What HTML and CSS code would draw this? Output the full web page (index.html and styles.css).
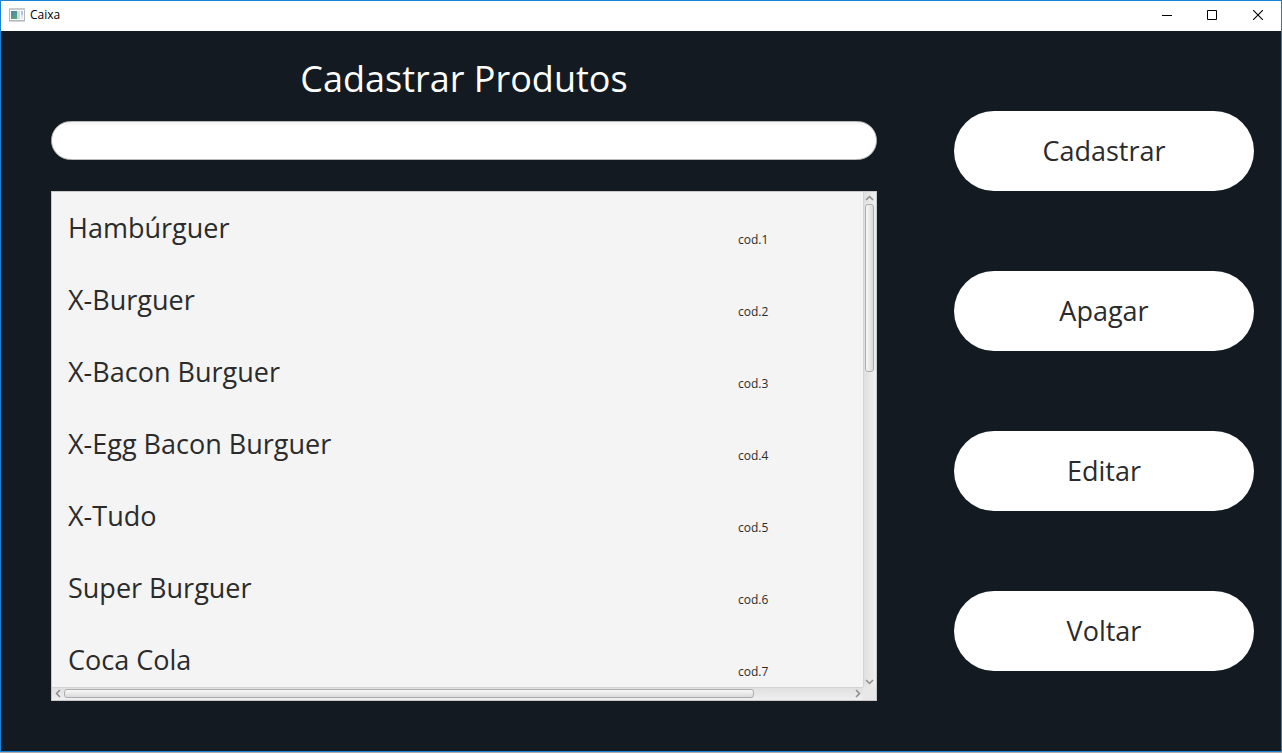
FILE: index.html
```html
<!DOCTYPE html>
<html lang="pt-BR">
<head>
<meta charset="utf-8">
<title>Caixa</title>
<link rel="stylesheet" href="styles.css">
</head>
<body>
<div class="window">
  <header class="titlebar">
    <svg class="app-icon" width="16" height="14" viewBox="0 0 16 14" aria-hidden="true">
      <defs>
        <linearGradient id="pane" x1="0" y1="0" x2="0.6" y2="1">
          <stop offset="0" stop-color="#4f82ad"/>
          <stop offset="1" stop-color="#58a583"/>
        </linearGradient>
      </defs>
      <rect x="0.5" y="0.5" width="15" height="12" fill="#fafafa" stroke="#b4b8bb"/>
      <path d="M0 1h16" stroke="#c9cccf" stroke-width="2"/>
      <rect x="2" y="3" width="6" height="8" fill="url(#pane)"/>
      <rect x="8" y="3" width="3" height="8" fill="#d5dadd"/>
      <rect x="12" y="3" width="2" height="4" fill="#a5c9d8"/>
      <rect x="12" y="7" width="2" height="4" fill="#e3e7e8"/>
      <path d="M0 13.5h16" stroke="#d3d5d6"/>
    </svg>
    <span class="titlebar-text">Caixa</span>
    <button class="win-button" type="button" aria-label="Minimizar">
      <svg width="12" height="10" viewBox="0 0 12 10"><path d="M2 5.5h10" stroke="#000"/></svg>
    </button>
    <button class="win-button" type="button" aria-label="Maximizar">
      <svg width="10" height="10" viewBox="0 0 10 10"><path d="M.5.5h9v9h-9z" fill="none" stroke="#000"/></svg>
    </button>
    <button class="win-button" type="button" aria-label="Fechar">
      <svg width="10" height="10" viewBox="0 0 10 10"><path d="M0 0l10 10M10 0L0 10" stroke="#000" stroke-width="1.1"/></svg>
    </button>
  </header>
  <main class="content">
    <section class="products">
      <h1 class="heading" id="heading">Cadastrar Produtos</h1>
      <input class="product-input" type="text" aria-labelledby="heading">
      <div class="list-pane">
        <ul class="list">
          <li class="row"><span class="name">Hambúrguer</span><span class="code">cod.1</span></li>
          <li class="row"><span class="name">X-Burguer</span><span class="code">cod.2</span></li>
          <li class="row"><span class="name">X-Bacon Burguer</span><span class="code">cod.3</span></li>
          <li class="row"><span class="name">X-Egg Bacon Burguer</span><span class="code">cod.4</span></li>
          <li class="row"><span class="name">X-Tudo</span><span class="code">cod.5</span></li>
          <li class="row"><span class="name">Super Burguer</span><span class="code">cod.6</span></li>
          <li class="row"><span class="name">Coca Cola</span><span class="code">cod.7</span></li>
        </ul>
        <div class="scroll scroll-v" aria-hidden="true">
          <svg class="arrow" width="9" height="6" viewBox="0 0 9 6"><path d="M1 5l3.500-3.500L8 5"/></svg>
          <div class="track"><div class="thumb"></div></div>
          <svg class="arrow" width="9" height="6" viewBox="0 0 9 6"><path d="M1 1l3.500 3.500L8 1"/></svg>
        </div>
        <div class="scroll scroll-h" aria-hidden="true">
          <svg class="arrow" width="6" height="9" viewBox="0 0 6 9"><path d="M5 1L1.500 4.500 5 8"/></svg>
          <div class="track"><div class="thumb"></div></div>
          <svg class="arrow" width="6" height="9" viewBox="0 0 6 9"><path d="M1 1l3.500 3.500L1 8"/></svg>
        </div>
      </div>
    </section>
    <nav class="actions" aria-label="Ações">
      <button class="action" type="button">Cadastrar</button>
      <button class="action" type="button">Apagar</button>
      <button class="action" type="button">Editar</button>
      <button class="action" type="button">Voltar</button>
    </nav>
  </main>
</div>
</body>
</html>
```
FILE: styles.css
```css
* {
  box-sizing: border-box;
}

body {
  margin: 0;
  height: 100vh;
  padding-bottom: 1px;
  background: #a9a9ae;
  font-family: "Open Sans", "Noto Sans", sans-serif;
  color: #2b2b2b;
}

.window {
  display: flex;
  flex-direction: column;
  height: 100%;
  border: 1px solid #1883d7;
  background: #131a21;
}

.titlebar {
  display: flex;
  align-items: center;
  flex: none;
  height: 30px;
  padding: 0 0 2px 8px;
  background: #fff;
}

.titlebar-text {
  flex: 1;
  padding-left: 5px;
  font-size: 12px;
  line-height: 16px;
  color: #000;
}

.win-button {
  display: flex;
  align-items: center;
  justify-content: center;
  width: 46px;
  height: 28px;
  padding: 0;
  border: 0;
  background: none;
}

.content {
  display: flex;
  gap: 77px;
  flex: 1;
  min-height: 0;
  padding: 20px 27px 50px 50px;
}

.products {
  display: flex;
  flex-direction: column;
  flex: 1;
  min-width: 0;
}

.heading {
  margin: 0 0 14px;
  font-size: 36px;
  font-weight: 400;
  line-height: 56px;
  text-align: center;
  color: #fff;
}

.product-input {
  flex: none;
  width: 100%;
  height: 39px;
  margin-bottom: 31px;
  padding: 0 20px;
  border: 1px solid #bababa;
  border-radius: 20px;
  background: linear-gradient(#f2f2f2, #fff 4px);
  font: inherit;
  font-size: 20px;
}

.list-pane {
  display: grid;
  grid-template: minmax(0, 1fr) 13px / minmax(0, 1fr) 13px;
  flex: 1;
  min-height: 0;
  border: 1px solid #c8c8c8;
  background: #e8e8e8;
}

.list {
  margin: 0;
  padding: 0;
  overflow: hidden;
  list-style: none;
  background: #f4f4f4;
}

.row {
  display: grid;
  grid-template-columns: 1fr 125px;
  align-items: start;
  height: 72px;
  padding-left: 16px;
}

.name {
  padding-top: 16px;
  font-size: 27px;
  line-height: 40px;
}

.code {
  padding-top: 40px;
  font-size: 12px;
  line-height: 16px;
}

.scroll {
  display: flex;
  align-items: center;
  gap: 3px;
}

.scroll-v {
  flex-direction: column;
  padding: 3px 2px 2px 0;
  border-left: 1px solid #d4d4d4;
  background: linear-gradient(90deg, #e0e0e0, #efefef);
}

.scroll-h {
  padding: 0 2px 2px 3px;
  border-top: 1px solid #d4d4d4;
  background: linear-gradient(#e0e0e0, #efefef);
}

.arrow {
  flex: none;
  fill: none;
  stroke: #8c8c8c;
  stroke-width: 1.5;
}

.track {
  flex: 1;
}

.thumb {
  border: 1px solid #adadad;
  border-radius: 3px;
}

.scroll-v .thumb {
  width: 9px;
  height: 35.5%;
  background: linear-gradient(90deg, #f8f8f8, #dadada);
}

.scroll-h .thumb {
  width: 87.6%;
  height: 9px;
  background: linear-gradient(#f8f8f8, #dadada);
}

.actions {
  display: flex;
  flex-direction: column;
  gap: 80px;
  flex: none;
  width: 300px;
  padding-top: 60px;
}

.action {
  height: 80px;
  padding: 0 20px;
  border: 0;
  border-radius: 40px;
  background: #fff;
  font: inherit;
  font-size: 27px;
  line-height: 40px;
  color: #2b2b2b;
}
```
